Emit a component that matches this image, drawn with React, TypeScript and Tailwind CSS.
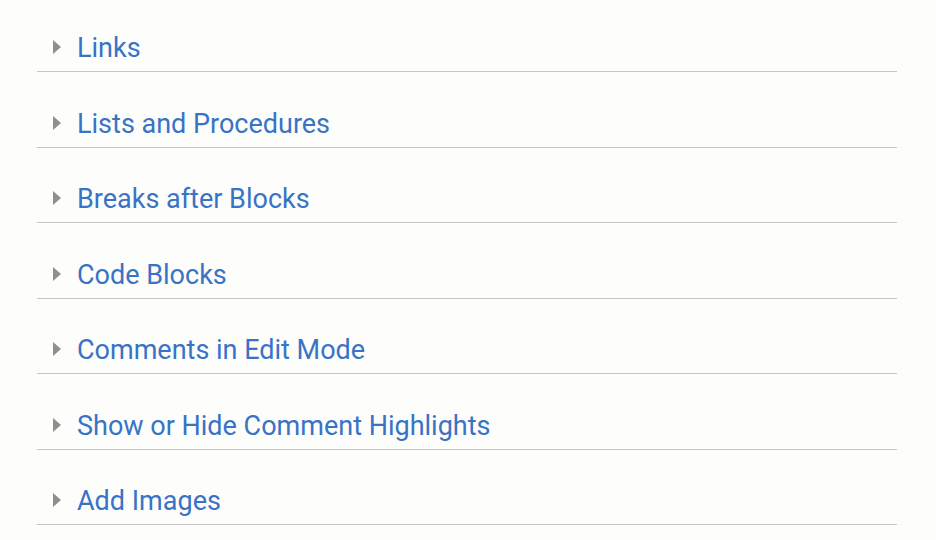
const ITEMS = [
  'Links',
  'Lists and Procedures',
  'Breaks after Blocks',
  'Code Blocks',
  'Comments in Edit Mode',
  'Show or Hide Comment Highlights',
  'Add Images',
];

function Caret() {
  return (
    <svg width="8" height="14" viewBox="0 0 8 14" className="shrink-0" aria-hidden="true">
      <path d="M0 0 L8 7 L0 14 Z" fill="#8f8f8f" />
    </svg>
  );
}

export default function App() {
  return (
    <div
      className="h-[540px] w-[936px] overflow-hidden bg-[#fdfdfc]"
      style={{ fontFamily: 'Roboto, "Liberation Sans", sans-serif' }}
    >
      <div className="ml-[37px] w-[860px]">
        {ITEMS.map((label, i) => (
          <div
            key={label}
            className={`flex items-end border-b border-[#c6c6c9] pb-[9px] ${i === 0 ? 'h-[72px]' : 'h-[75.5px]'}`}
          >
            <div className="flex h-[28px] items-center">
              <span className="ml-[16px] mr-[16px] flex items-center pb-[2px]">
                <Caret />
              </span>
              <span className="text-[27px] leading-[28px] text-[#3873c6]">{label}</span>
            </div>
          </div>
        ))}
      </div>
    </div>
  );
}
